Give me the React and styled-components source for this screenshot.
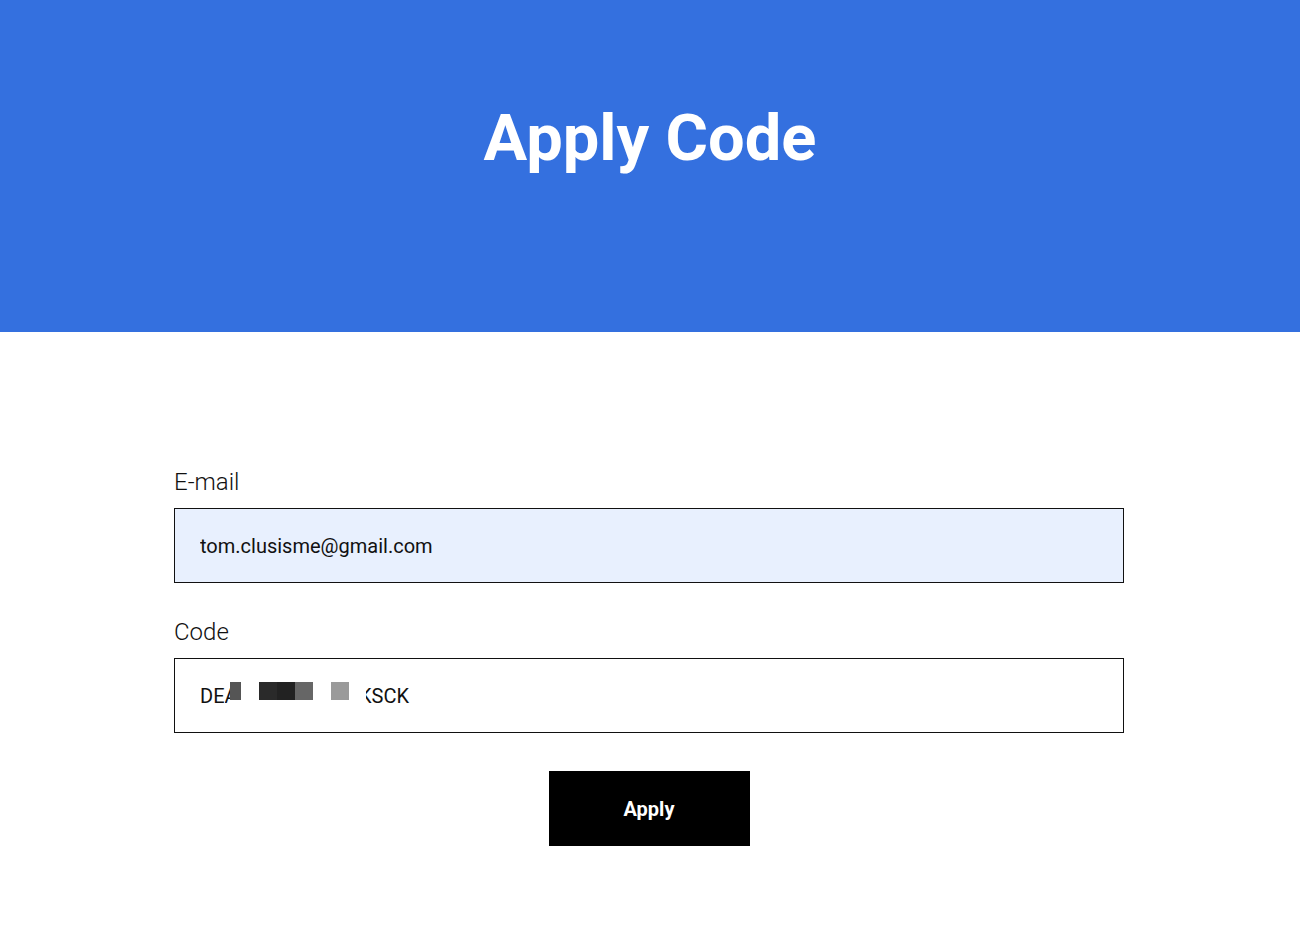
import React, { useState } from 'react';
import styled, { createGlobalStyle } from 'styled-components';

const GlobalStyle = createGlobalStyle`
  html, body {
    margin: 0;
    padding: 0;
    background: #ffffff;
    font-family: Roboto, "Liberation Sans", sans-serif;
  }
  * { box-sizing: border-box; }
`;

const Header = styled.header`
  height: 332px;
  background-color: #3470df;
  display: flex;
  justify-content: center;
  padding-top: 106px;
`;

const Title = styled.h1`
  margin: 0;
  font-size: 65px;
  line-height: 1;
  font-weight: 700;
  color: #ffffff;
`;

const Form = styled.form`
  width: 950px;
  margin-left: calc(50% - 476px);
  padding-top: 136px;
  display: flex;
  flex-direction: column;
`;

const Field = styled.div`
  display: flex;
  flex-direction: column;
  gap: 12px;
  margin-bottom: ${props => props.last ? 38 : 35}px;
`;

const Label = styled.label`
  font-size: 24px;
  line-height: 28px;
  font-weight: 300;
  color: #111111;
`;

const Input = styled.input`
  height: 75px;
  border: 1px solid #111111;
  border-radius: 0;
  padding: 0 25px;
  font-family: Roboto, "Liberation Sans", sans-serif;
  font-size: 20px;
  color: #111111;
  background-color: ${props => props.filled ? '#e8f0fe' : '#ffffff'};
  outline: none;
`;

const CodeBox = styled.div`
  height: 75px;
  border: 1px solid #111111;
  padding: 0 25px;
  display: flex;
  align-items: center;
  font-size: 20px;
  color: #111111;
`;

const Redacted = styled.span`
  display: inline-flex;
  align-items: center;
  height: 18px;
  margin-top: -10px;
`;

const Block = styled.span`
  display: inline-block;
  width: ${props => props.w || 18}px;
  height: 18px;
  background-color: ${props => props.color};
`;

const Clip = styled.span`
  display: inline-block;
  width: ${props => props.w}px;
  overflow: hidden;
  direction: ${props => props.right ? 'rtl' : 'ltr'};
`;

const Actions = styled.div`
  display: flex;
  justify-content: center;
`;

const ApplyButton = styled.button`
  width: 201px;
  height: 75px;
  border: none;
  border-radius: 0;
  background-color: #000000;
  color: #ffffff;
  font-family: Roboto, "Liberation Sans", sans-serif;
  font-size: 20px;
  font-weight: 700;
  cursor: pointer;
`;

const redaction = [
  { w: 11, color: '#555555' },
  { w: 18, color: '#ffffff' },
  { w: 18, color: '#2a2a2a' },
  { w: 18, color: '#222222' },
  { w: 18, color: '#666666' },
  { w: 18, color: '#ffffff' },
  { w: 18, color: '#9a9a9a' },
  { w: 17, color: '#ffffff' },
];

export default function App() {
  const [email, setEmail] = useState('tom.clusisme@gmail.com');

  return (
    <>
      <GlobalStyle />
      <Header>
        <Title>Apply Code</Title>
      </Header>
      <Form onSubmit={e => e.preventDefault()}>
        <Field>
          <Label htmlFor="email">E-mail</Label>
          <Input id="email" filled value={email} onChange={e => setEmail(e.target.value)} />
        </Field>
        <Field last>
          <Label>Code</Label>
          <CodeBox>
            DE<Clip w={5}>A</Clip>
            <Redacted>
              {redaction.map((b, i) => (
                <Block key={i} w={b.w} color={b.color} />
              ))}
            </Redacted>
            <Clip w={6} right>K</Clip>SCK
          </CodeBox>
        </Field>
        <Actions>
          <ApplyButton type="submit">Apply</ApplyButton>
        </Actions>
      </Form>
    </>
  );
}
